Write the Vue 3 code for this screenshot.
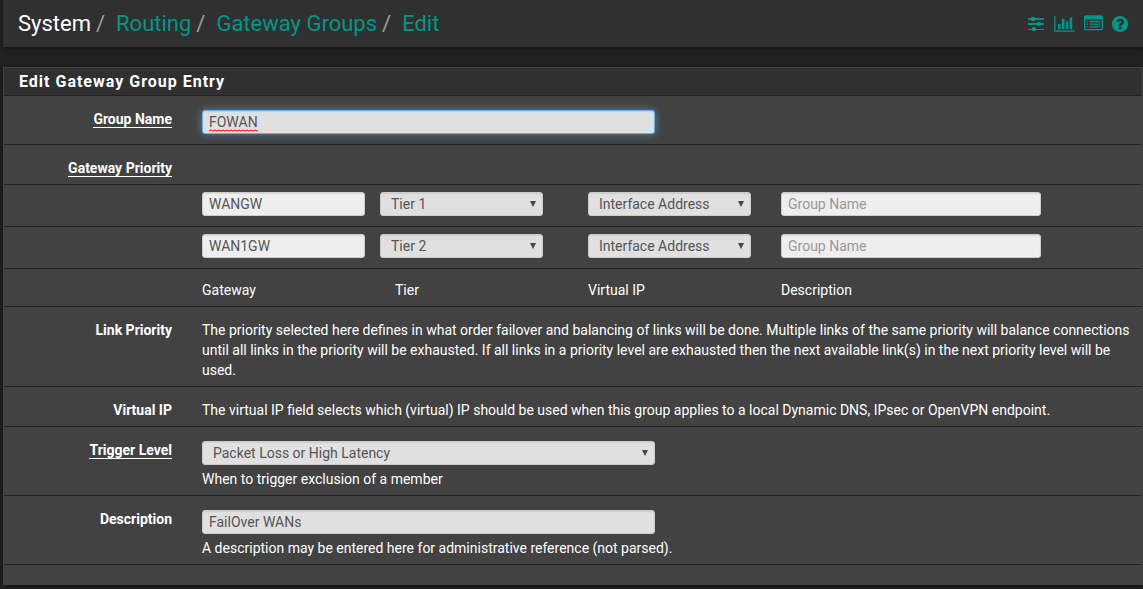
<script setup>
import { ref } from 'vue'

const groupName = ref('FOWAN')
const trigger = ref('Packet Loss or High Latency')
const description = ref('FailOver WANs')
const members = ref([
  { gateway: 'WANGW', tier: 'Tier 1', vip: 'Interface Address', descr: '' },
  { gateway: 'WAN1GW', tier: 'Tier 2', vip: 'Interface Address', descr: '' },
])
const tiers = ['Never', 'Tier 1', 'Tier 2', 'Tier 3', 'Tier 4', 'Tier 5']
const triggers = ['Member Down', 'Packet Loss', 'High Latency', 'Packet Loss or High Latency']
</script>

<template>
  <div class="page">
    <header class="topbar">
      <nav class="crumbs" aria-label="Breadcrumb">
        <span class="crumb current">System</span>
        <span class="slash">/</span>
        <a class="crumb" href="#">Routing</a>
        <span class="slash">/</span>
        <a class="crumb" href="#">Gateway Groups</a>
        <span class="slash">/</span>
        <a class="crumb" href="#">Edit</a>
      </nav>
      <div class="actions">
        <a href="#" aria-label="Advanced settings">
          <svg width="17" height="16" viewBox="0 0 17 16">
            <path d="M0 2h16v2H0zM0 7h16v2H0zM0 13h16v1H0z" />
            <rect x="3" y="1" width="4" height="4" rx="1" />
            <rect x="9" y="6" width="4" height="4" rx="1" />
            <rect x="4" y="11" width="4" height="4" rx="1" />
          </svg>
        </a>
        <a href="#" aria-label="Status">
          <svg width="21" height="18" viewBox="0 0 2048 1792">
            <path d="M640 896v512h-256v-512h256zm384-512v1024h-256v-1024h256zm1024 1152v128h-2048v-1536h128v1408h1920zm-640-896v768h-256v-768h256zm384-384v1152h-256v-1152h256z" />
          </svg>
        </a>
        <a href="#" aria-label="Logs">
          <svg width="19" height="19" viewBox="0 0 1792 1792">
            <path d="M384 1184v64q0 13-9.500 22.500t-22.500 9.500h-64q-13 0-22.500-9.500t-9.500-22.500v-64q0-13 9.500-22.500t22.500-9.500h64q13 0 22.500 9.500t9.500 22.500zM384 928v64q0 13-9.500 22.500t-22.500 9.500h-64q-13 0-22.500-9.500t-9.500-22.500v-64q0-13 9.500-22.500t22.500-9.500h64q13 0 22.500 9.500t9.500 22.500zM384 672v64q0 13-9.500 22.500t-22.500 9.500h-64q-13 0-22.500-9.500t-9.500-22.500v-64q0-13 9.500-22.500t22.500-9.500h64q13 0 22.500 9.500t9.500 22.500zM1536 1184v64q0 13-9.500 22.500t-22.500 9.500h-960q-13 0-22.500-9.500t-9.500-22.500v-64q0-13 9.500-22.500t22.500-9.500h960q13 0 22.500 9.500t9.500 22.500zM1536 928v64q0 13-9.500 22.500t-22.500 9.500h-960q-13 0-22.500-9.500t-9.500-22.500v-64q0-13 9.500-22.500t22.500-9.500h960q13 0 22.500 9.500t9.500 22.500zM1536 672v64q0 13-9.500 22.500t-22.500 9.500h-960q-13 0-22.500-9.500t-9.500-22.500v-64q0-13 9.500-22.500t22.500-9.500h960q13 0 22.500 9.500t9.500 22.500zM1664 1376v-832q0-13-9.500-22.500t-22.500-9.500h-1472q-13 0-22.500 9.500t-9.500 22.500v832q0 13 9.500 22.500t22.500 9.500h1472q13 0 22.500-9.500t9.500-22.500zM1792 288v1088q0 66-47 113t-113 47h-1472q-66 0-113-47t-47-113v-1088q0-66 47-113t113-47h1472q66 0 113 47t47 113z" />
          </svg>
        </a>
        <a href="#" aria-label="Help">
          <svg width="16" height="16" viewBox="128 128 1536 1536">
            <path d="M1024 1376v-192q0-14-9-23t-23-9h-192q-14 0-23 9t-9 23v192q0 14 9 23t23 9h192q14 0 23-9t9-23zm256-672q0-88-55.500-163t-138.500-116-170-41q-243 0-371 213-15 24 8 42l132 100q7 6 19 6 16 0 25-12 53-68 86-92 34-24 86-24 48 0 85.500 26t37.500 59q0 38-20 61t-68 45q-63 28-115.500 86.500t-52.500 125.500v36q0 14 9 23t23 9h192q14 0 23-9t9-23q0-19 21.500-49.500t54.500-49.500q32-18 49-28.500t46-35 44.500-48 28-60.500 12.500-81zm384 192q0 209-103 385.500t-279.500 279.500-385.500 103-385.500-103-279.500-279.500-103-385.500 103-385.500 279.500-279.500 385.500-103 385.500 103 279.500 279.500 103 385.500z" />
          </svg>
        </a>
      </div>
    </header>

    <form class="panel" @submit.prevent>
      <h2 class="panel-title">Edit Gateway Group Entry</h2>

      <div class="row">
        <label class="name" for="group-name"><span class="required">Group Name</span></label>
        <div class="field">
          <div class="control focused">
            <input id="group-name" v-model="groupName" type="text" spellcheck="false" />
            <svg class="squiggle" width="49" height="3" aria-hidden="true">
              <defs>
                <pattern id="wave" width="4" height="3" patternUnits="userSpaceOnUse">
                  <path d="M0 2 L2 1 L4 2" fill="none" stroke="#f00" />
                </pattern>
              </defs>
              <rect width="49" height="3" fill="url(#wave)" />
            </svg>
          </div>
        </div>
      </div>

      <div class="row">
        <div class="name"><span class="required">Gateway Priority</span></div>
      </div>

      <div v-for="(m, i) in members" :key="i" class="row member">
        <div class="cell first">
          <input v-model="m.gateway" class="plain" type="text" readonly aria-label="Gateway" />
        </div>
        <div class="cell flush">
          <div class="control select">
            <select v-model="m.tier" aria-label="Tier">
              <option v-for="t in tiers" :key="t">{{ t }}</option>
            </select>
          </div>
        </div>
        <div class="cell">
          <div class="control select">
            <select v-model="m.vip" aria-label="Virtual IP">
              <option>Interface Address</option>
            </select>
          </div>
        </div>
        <div class="cell wide">
          <input v-model="m.descr" class="plain" type="text" placeholder="Group Name" aria-label="Description" />
        </div>
      </div>

      <div class="row captions">
        <div class="cell first">Gateway</div>
        <div class="cell">Tier</div>
        <div class="cell">Virtual IP</div>
        <div class="cell wide">Description</div>
      </div>

      <div class="row">
        <div class="name">Link Priority</div>
        <p class="text">The priority selected here defines in what order failover and balancing of links will be done. Multiple links of the same priority will balance connections until all links in the priority will be exhausted. If all links in a priority level are exhausted then the next available link(s) in the next priority level will be used.</p>
      </div>

      <div class="row">
        <div class="name">Virtual IP</div>
        <p class="text">The virtual IP field selects which (virtual) IP should be used when this group applies to a local Dynamic DNS, IPsec or OpenVPN endpoint.</p>
      </div>

      <div class="row">
        <label class="name" for="trigger"><span class="required">Trigger Level</span></label>
        <div class="field helped">
          <div class="control select">
            <select id="trigger" v-model="trigger">
              <option v-for="t in triggers" :key="t">{{ t }}</option>
            </select>
          </div>
          <p class="help">When to trigger exclusion of a member</p>
        </div>
      </div>

      <div class="row">
        <label class="name" for="description">Description</label>
        <div class="field helped">
          <div class="control">
            <input id="description" v-model="description" type="text" />
          </div>
          <p class="help">A description may be entered here for administrative reference (not parsed).</p>
        </div>
      </div>

      <div class="panel-end"></div>
    </form>
  </div>
</template>

<style>
body {
  background: #212121;
}
</style>

<style scoped>
.page {
  padding: 0 0 4px 3px;
  overflow: hidden;
  color: #fff;
  font: 400 14px/20px Roboto, sans-serif;
}
.topbar {
  display: flex;
  align-items: center;
  justify-content: space-between;
  height: 47px;
  padding: 0 15px;
  background: #303030;
  box-shadow: 0 1px 4px rgba(0, 0, 0, 0.5);
}
.crumbs {
  display: flex;
  font-size: 22px;
  line-height: 30px;
  font-weight: 400;
}
.slash {
  padding: 0 11px 0 5px;
  color: #9e9e9e;
}
.crumb {
  color: #009688;
  text-decoration: none;
}
.current {
  color: #fff;
}
.actions {
  display: flex;
  align-items: center;
  gap: 9px;
}
.actions a {
  display: flex;
}
.actions svg {
  fill: #009688;
}
.panel {
  margin-top: 20px;
  overflow: hidden;
  border: solid #424242;
  border-width: 1px 1px 0;
  background: #424242;
  box-shadow: 0 2px 5px rgba(0, 0, 0, 0.5);
}
.panel-title {
  margin: 0;
  padding: 4px 15px 3px;
  border-bottom: 1px solid #212121;
  background: #303030;
  font-size: 16px;
  line-height: 20px;
  font-weight: 700;
  letter-spacing: 1px;
}
.row {
  display: grid;
  grid-template-columns: repeat(12, minmax(0, 1fr));
  margin: 0 -10px;
  border-bottom: 1px solid #212121;
}
.name {
  grid-column: span 2;
  padding: 13px 15px 6px;
  text-align: right;
  font-weight: 700;
}
.required {
  border-bottom: 1px solid #fff;
}
.text {
  grid-column: span 10;
  margin: 0;
  padding: 13px 15px 6px;
}
.field {
  grid-column: span 10;
  padding: 14px 15px 10px;
}
.field .control {
  width: calc(50% - 15px);
}
.helped {
  padding-bottom: 6px;
}
.help {
  margin: 4px 0 0;
}
.cell {
  grid-column: span 2;
  padding: 7px 15px 10px;
}
.first {
  grid-column: 3 / span 2;
}
.flush {
  padding: 7px 30px 10px 0;
}
.wide {
  grid-column: span 3;
}
.captions .cell {
  padding: 11px 15px 6px;
}
.control {
  position: relative;
}
input,
select {
  display: block;
  box-sizing: border-box;
  width: 100%;
  height: 24px;
  margin: 0;
  padding: 0 6px;
  appearance: none;
  border: 1px solid #ccc;
  border-radius: 3px;
  outline: 0;
  background: #e0e0e0;
  box-shadow: inset 0 1px 1px rgba(0, 0, 0, 0.08);
  color: #555;
  font: 400 14px/20px Roboto, sans-serif;
}
select {
  padding: 0 10px;
}
.plain {
  background: #eee;
}
input::placeholder {
  color: #999;
  opacity: 1;
}
.focused input {
  border-color: #66afe9;
  box-shadow: inset 0 1px 1px rgba(0, 0, 0, 0.08), 0 0 8px rgba(102, 175, 233, 0.6);
}
.squiggle {
  position: absolute;
  left: 7px;
  bottom: 2px;
}
.select::after {
  content: '';
  position: absolute;
  top: 9px;
  right: 7px;
  border: solid transparent;
  border-width: 6px 3px 0;
  border-top-color: #444;
  pointer-events: none;
}
.panel-end {
  height: 20px;
}
</style>
